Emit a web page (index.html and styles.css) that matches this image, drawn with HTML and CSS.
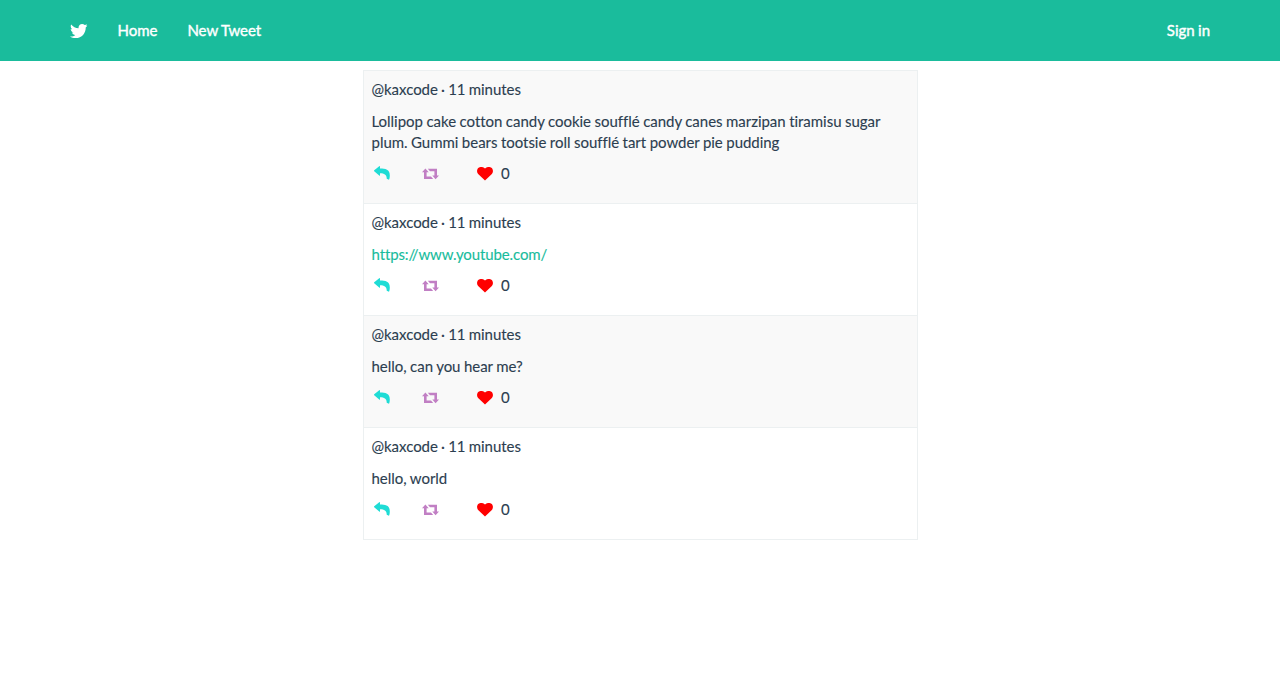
FILE: index.html
```html
<!DOCTYPE html>
<html lang="en">
<head>
<meta charset="utf-8">
<title>Tweets</title>
<link rel="stylesheet" href="styles.css">
</head>
<body>
<svg width="0" height="0" class="sprite">
  <symbol id="bird" viewBox="0 0 512 512"><path d="M459.37 151.716c.325 4.548.325 9.097.325 13.645 0 138.72-105.583 298.558-298.558 298.558-59.452 0-114.68-17.219-161.137-47.106 8.447.974 16.568 1.299 25.34 1.299 49.055 0 94.213-16.568 130.274-44.832-46.132-.975-84.792-31.188-98.112-72.772 6.498.974 12.995 1.624 19.818 1.624 9.421 0 18.843-1.3 27.614-3.573-48.081-9.747-84.143-51.98-84.143-102.985v-1.299c13.969 7.797 30.214 12.67 47.431 13.319-28.264-18.843-46.781-51.005-46.781-87.391 0-19.492 5.197-37.36 14.294-52.954 51.655 63.675 129.3 105.258 216.365 109.807-1.624-7.797-2.599-15.918-2.599-24.04 0-57.828 46.782-104.934 104.934-104.934 30.213 0 57.502 12.67 76.67 33.137 23.715-4.548 46.456-13.32 66.599-25.34-7.798 24.366-24.366 44.833-46.132 57.827 21.117-2.273 41.584-8.122 60.426-16.243-14.292 20.791-32.161 39.308-52.628 54.253z"/></symbol>
  <symbol id="reply" viewBox="0 0 16 14"><path d="M.2 4.300 5.200.2Q6 -.2 6 .8V2.600C11.500 2.700 15.800 3.300 15.800 9.500 15.800 11.500 15.500 12.800 15 13.800L12.700 12.800C12.900 8.900 10.500 7.300 6 7.200V9.200Q6 10.200 5.200 9.500L.2 5.200Q-.2 4.800 .2 4.300z"/></symbol>
  <symbol id="retweet" viewBox="0 0 17 12"><path d="M3.400.6 6.700 4.300H4.600V8.500H9L11.200 11H2V4.300H0zM5.800.8H15V7.400h2L13.600 11.200 10.300 7.400h2.100V3.200H8z"/></symbol>
  <symbol id="heart" viewBox="0 0 16 14"><path d="M8 13.600 1.400 7.300C-.5 5.400-.3 2.100 1.600.8 3.600-.6 6.400-.2 8 1.500c1.600-1.700 4.400-2.100 6.400-.7 1.900 1.300 2.100 4.600.2 6.500z"/></symbol>
</svg>
<nav class="navbar">
  <a class="brand" href="#"><svg class="bird"><use href="#bird"/></svg></a>
  <a href="#">Home</a>
  <a href="#">New Tweet</a>
  <a class="signin" href="#">Sign in</a>
</nav>
<main class="feed">
  <article class="tweet">
    <p class="meta">@kaxcode · 11 minutes</p>
    <p class="text">Lollipop cake cotton candy cookie soufflé candy canes marzipan tiramisu sugar plum. Gummi bears tootsie roll soufflé tart powder pie pudding</p>
    <div class="actions"><svg class="reply"><use href="#reply"/></svg><svg class="retweet"><use href="#retweet"/></svg><svg class="heart"><use href="#heart"/></svg><span>0</span></div>
  </article>
  <article class="tweet">
    <p class="meta">@kaxcode · 11 minutes</p>
    <p class="text"><a class="link" href="#">https://www.youtube.com/</a></p>
    <div class="actions"><svg class="reply"><use href="#reply"/></svg><svg class="retweet"><use href="#retweet"/></svg><svg class="heart"><use href="#heart"/></svg><span>0</span></div>
  </article>
  <article class="tweet">
    <p class="meta">@kaxcode · 11 minutes</p>
    <p class="text">hello, can you hear me?</p>
    <div class="actions"><svg class="reply"><use href="#reply"/></svg><svg class="retweet"><use href="#retweet"/></svg><svg class="heart"><use href="#heart"/></svg><span>0</span></div>
  </article>
  <article class="tweet">
    <p class="meta">@kaxcode · 11 minutes</p>
    <p class="text">hello, world</p>
    <div class="actions"><svg class="reply"><use href="#reply"/></svg><svg class="retweet"><use href="#retweet"/></svg><svg class="heart"><use href="#heart"/></svg><span>0</span></div>
  </article>
</main>
</body>
</html>
```
FILE: styles.css
```css
* { box-sizing: border-box; }
body {
  margin: 0;
  background: #fff;
  color: #2c3e50;
  font: 15px/21px Lato, "Liberation Sans", sans-serif;
  letter-spacing: -0.03px;
  word-spacing: -0.3px;
  -webkit-text-stroke: 0.12px currentColor;
}
.sprite { display: block; position: absolute; }
a { color: #18bc9c; text-decoration: none; }
.navbar {
  display: flex;
  align-items: center;
  gap: 30px;
  height: 61px;
  padding: 0 70px;
  background: #1abc9c;
}
.navbar a { color: #fff; -webkit-text-stroke: 0.4px #fff; }
.brand { display: flex; }
.bird { width: 17.5px; height: 18px; fill: #fff; }
.signin { margin-left: auto; }
.feed {
  width: 555px;
  margin: 9px 0 0 363px;
  border: 1px solid #ecf0f1;
  border-top: 0;
}
.tweet {
  padding: 8px 8px 19px 7.5px;
  border-top: 1px solid #ecf0f1;
}
.tweet:nth-child(odd) { background: #f9f9f9; }
.tweet p { margin: 0 0 11px; }
.tweet .text { margin-bottom: 10px; }
.meta { word-spacing: -0.6px; }
.link { letter-spacing: -0.12px; }
.actions { display: flex; align-items: center; height: 21px; }
.actions svg { stroke: none; }
.reply { width: 16px; height: 14px; margin: -1px 0 0 2.5px; fill: #1fdcd5; }
.retweet { width: 17px; height: 12px; margin: 1px 0 0 32px; fill: #c17fc4; }
.heart { width: 16px; height: 14px; margin: 0 8px 0 38px; fill: #f00; }
```
